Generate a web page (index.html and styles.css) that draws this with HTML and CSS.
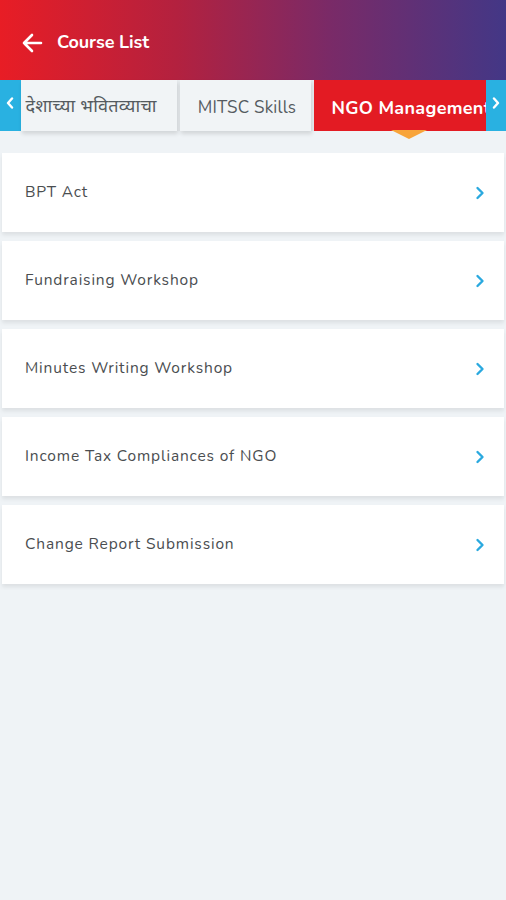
FILE: index.html
```html
<!DOCTYPE html>
<html lang="en">
<head>
  <meta charset="UTF-8">
  <title>Course List</title>
  <meta name="viewport" content="width=device-width, initial-scale=1.0">
  <link rel="stylesheet" href="styles.css">
</head>
<body>

<header class="topbar">
  <svg class="back" width="22" height="20" viewBox="0 0 22 20">
    <path d="M20 10H3M11 2L3 10l8 8" fill="none" stroke="#fff" stroke-width="2.6" stroke-linecap="round" stroke-linejoin="round"/>
  </svg>
  <h1>Course List</h1>
</header>

<nav class="tabs">
  <button class="nav-btn">
    <svg width="8" height="12" viewBox="0 0 8 12"><path d="M6 1.5L2 6l4 4.5" fill="none" stroke="#fff" stroke-width="2.4" stroke-linecap="round" stroke-linejoin="round"/></svg>
  </button>
  <div class="tab-list">
    <div class="tab first">देशाच्या भवितव्याचा</div>
    <div class="tab">MITSC Skills</div>
    <div class="tab active"><span>NGO Management</span></div>
  </div>
  <button class="nav-btn">
    <svg width="8" height="12" viewBox="0 0 8 12"><path d="M2 1.5L6 6l-4 4.5" fill="none" stroke="#fff" stroke-width="2.4" stroke-linecap="round" stroke-linejoin="round"/></svg>
  </button>
</nav>

<main class="courses">
  <div class="course"><span>BPT Act</span><svg class="chev" width="10" height="14" viewBox="0 0 10 14"><path d="M2.5 2l5 5-5 5" fill="none" stroke="#2aa9df" stroke-width="2.4" stroke-linecap="round" stroke-linejoin="round"/></svg></div>
  <div class="course"><span>Fundraising Workshop</span><svg class="chev" width="10" height="14" viewBox="0 0 10 14"><path d="M2.5 2l5 5-5 5" fill="none" stroke="#2aa9df" stroke-width="2.4" stroke-linecap="round" stroke-linejoin="round"/></svg></div>
  <div class="course"><span>Minutes Writing Workshop</span><svg class="chev" width="10" height="14" viewBox="0 0 10 14"><path d="M2.5 2l5 5-5 5" fill="none" stroke="#2aa9df" stroke-width="2.4" stroke-linecap="round" stroke-linejoin="round"/></svg></div>
  <div class="course"><span>Income Tax Compliances of NGO</span><svg class="chev" width="10" height="14" viewBox="0 0 10 14"><path d="M2.5 2l5 5-5 5" fill="none" stroke="#2aa9df" stroke-width="2.4" stroke-linecap="round" stroke-linejoin="round"/></svg></div>
  <div class="course"><span>Change Report Submission</span><svg class="chev" width="10" height="14" viewBox="0 0 10 14"><path d="M2.5 2l5 5-5 5" fill="none" stroke="#2aa9df" stroke-width="2.4" stroke-linecap="round" stroke-linejoin="round"/></svg></div>
</main>

</body>
</html>
```

FILE: styles.css
```css
body {
  margin: 0;
  background-color: #eff3f6;
  font-family: 'Nunito', 'Lato', 'Noto Sans', 'Noto Sans Devanagari', sans-serif;
  width: 506px;
  height: 900px;
  overflow: hidden;
}

.topbar {
  height: 80px;
  display: flex;
  align-items: center;
  gap: 14px;
  padding: 4px 0 0 21px;
  box-sizing: border-box;
  background: linear-gradient(90deg, #e81d25 0%, #b3213f 35%, #7a2a67 65%, #433786 100%);
}

.topbar h1 {
  margin: 0;
  color: #fff;
  font-size: 18px;
  font-weight: 700;
  letter-spacing: -0.1px;
}

.back {
  margin-top: 2px;
}

/* Pasek zakładek */
.tabs {
  display: flex;
  height: 51px;
  background-color: #e8ecef;
}

.nav-btn {
  width: 22px;
  border: none;
  padding: 0;
  background-color: #29b1e1;
  display: flex;
  align-items: center;
  justify-content: center;
}

.nav-btn svg {
  margin-top: -6px;
}

.tab-list {
  flex: 1;
  display: flex;
  gap: 3px;
  position: relative;
}

.tab {
  flex-shrink: 0;
  display: flex;
  align-items: center;
  justify-content: center;
  padding-top: 4px;
  box-sizing: border-box;
  background-color: #f1f4f6;
  color: #555b60;
  font-size: 17px;
  letter-spacing: 0.2px;
  box-shadow: 1px 3px 4px rgba(0, 0, 0, 0.12);
}

.tab.first {
  width: 156px;
  justify-content: flex-start;
  padding-left: 5px;
  font-size: 18px;
  letter-spacing: 0.3px;
  font-family: 'Noto Sans Devanagari', 'Noto Sans', sans-serif;
}

.tab:nth-child(2) {
  width: 131px;
  padding-left: 4px;
}

.tab.active {
  position: relative;
  width: 172px;
  justify-content: flex-start;
  padding-left: 18px;
  background-color: #e31b23;
  color: #fff;
  font-weight: 700;
  font-size: 18px;
  letter-spacing: 0.3px;
  box-shadow: none;
}

.tab.active span {
  white-space: nowrap;
  overflow: hidden;
}

.tab.active::after {
  content: '';
  position: absolute;
  left: 77px;
  bottom: -8px;
  border-left: 18px solid transparent;
  border-right: 18px solid transparent;
  border-top: 9px solid #f8a43a;
}

/* Lista kursów */
.courses {
  display: flex;
  flex-direction: column;
  gap: 9px;
  padding: 22px 2px 0;
}

.course {
  height: 79px;
  display: flex;
  align-items: center;
  justify-content: space-between;
  padding: 0 19px 0 23px;
  background-color: #fff;
  color: #4a4d50;
  font-size: 15.5px;
  letter-spacing: 0.85px;
  box-shadow: 0 3px 4px rgba(0, 0, 0, 0.08);
}

.course span {
  margin-top: -2px;
}
```
